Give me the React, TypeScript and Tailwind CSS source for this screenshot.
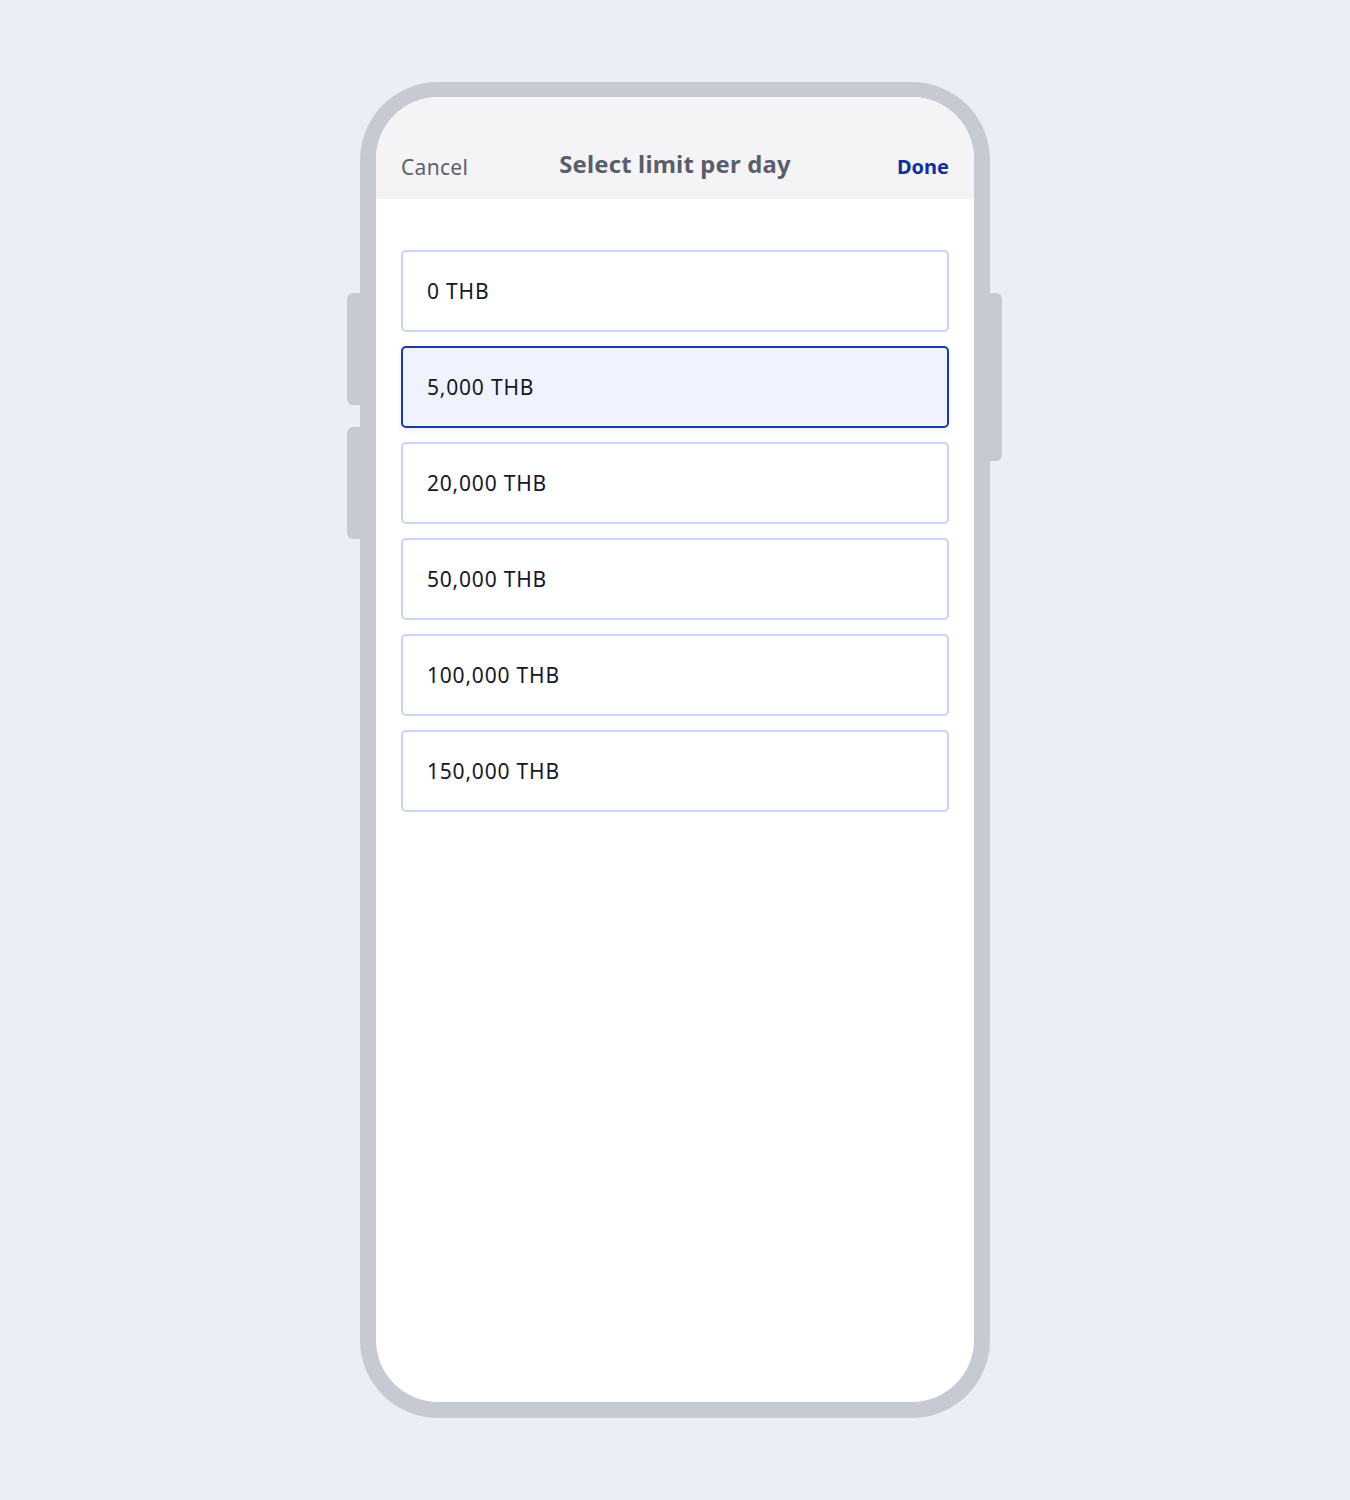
const options = ['0 THB', '5,000 THB', '20,000 THB', '50,000 THB', '100,000 THB', '150,000 THB']
const selected = '5,000 THB'

export default function App() {
  return (
    <div
      className="flex h-[1500px] w-full justify-center bg-[#ebeef6] pt-[82px]"
      style={{ fontFamily: '"Noto Sans", "Open Sans", sans-serif' }}
    >
      <div className="relative h-[1336px] w-[630px]">
        {/* side buttons */}
        <div className="absolute left-[-13px] top-[211px] h-[112px] w-[14px] rounded-l-[6px] bg-[#c7cad3]" />
        <div className="absolute left-[-13px] top-[345px] h-[112px] w-[14px] rounded-l-[6px] bg-[#c7cad3]" />
        <div className="absolute right-[-12px] top-[211px] h-[168px] w-[14px] rounded-r-[6px] bg-[#c7cad3]" />

        <div className="relative h-full w-full rounded-[78px] border-[16px] border-t-[15px] border-[#c7cad3] bg-[#c7cad3]">
          <div className="flex h-full flex-col overflow-hidden rounded-[62px] bg-white">
            <div className="grid h-[102px] shrink-0 grid-cols-[1fr_auto_1fr] items-end bg-[#f4f4f6] px-[25px] pb-[18px]">
              <span className="text-[21px] leading-[28px] tracking-[0.3px] text-[#5d6170]">Cancel</span>
              <span className="mb-[2px] text-[23.8px] font-bold leading-[30px] tracking-[0.2px] text-[#5a5d6b]">
                Select limit per day
              </span>
              <span className="text-right text-[20px] font-bold leading-[28px] text-[#0f2f9c]">Done</span>
            </div>
            <div className="flex flex-col gap-[14px] px-[25px] pt-[51px]">
              {options.map((o) => {
                const active = o === selected
                return (
                  <div
                    key={o}
                    className={
                      active
                        ? 'flex h-[82px] items-center rounded-[5px] border-2 border-[#1d3a9e] bg-[#f0f3fe] px-[24px] shadow-[0_3px_6px_rgba(30,58,158,0.08)]'
                        : 'flex h-[82px] items-center rounded-[5px] border-2 border-[#c8d3f6] bg-white px-[24px]'
                    }
                  >
                    <span className="text-[21px] leading-[28px] tracking-[0.8px] text-[#15172a]">{o}</span>
                  </div>
                )
              })}
            </div>
          </div>
        </div>
      </div>
    </div>
  )
}
